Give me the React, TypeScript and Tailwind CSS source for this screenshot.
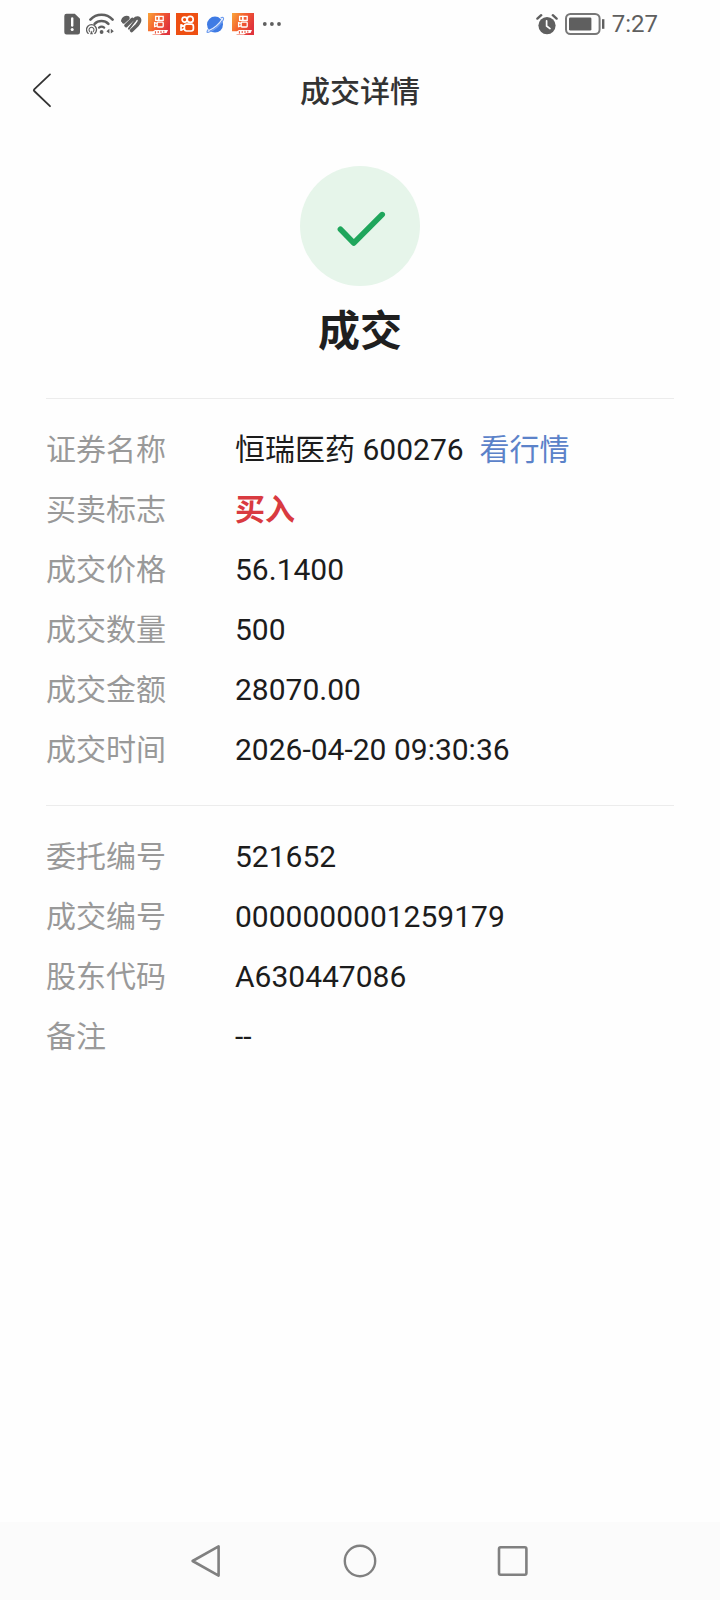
import React from 'react'

// Type definition for one label / value line
interface DetailItem {
  label: string
  value: string
  highlight?: boolean
  link?: { text: string; href: string }
}

// Trade details
const tradeItems: DetailItem[] = [
  { label: '证券名称', value: '恒瑞医药 600276', link: { text: '看行情', href: '#quote' } },
  { label: '买卖标志', value: '买入', highlight: true },
  { label: '成交价格', value: '56.1400' },
  { label: '成交数量', value: '500' },
  { label: '成交金额', value: '28070.00' },
  { label: '成交时间', value: '2026-04-20 09:30:36' }
]

// Order reference numbers
const orderItems: DetailItem[] = [
  { label: '委托编号', value: '521652' },
  { label: '成交编号', value: '0000000001259179' },
  { label: '股东代码', value: 'A630447086' },
  { label: '备注', value: '--' }
]

const SimIcon = () => (
  <svg width="16" height="22" viewBox="0 0 16 22" fill="none">
    <path d="M2.5 0.7H10.8L16 5.8V19.2A2.2 2.2 0 0 1 13.8 21.4H2.5A2.2 2.2 0 0 1 0.3 19.2V2.9A2.2 2.2 0 0 1 2.5 0.7Z" fill="#5f5f5f" />
    <path d="M8.2 5.5V12.5" stroke="#fff" strokeWidth="2.4" strokeLinecap="round" />
    <circle cx="8.2" cy="16.6" r="1.5" fill="#fff" />
  </svg>
)

const WifiIcon = () => (
  <svg width="28" height="22" viewBox="0 0 28 22" fill="none" stroke="#5f5f5f" strokeLinecap="round">
    <path d="M4.4 6.6C10.4 0.2 20.6 0.2 26.6 6.6" strokeWidth="2.6" />
    <path d="M8.6 10.8C12.2 7 18.8 7 22.4 10.8" strokeWidth="2.6" />
    <path d="M13 14.6C14.6 13.4 16.6 13.4 18.2 14.6" strokeWidth="2.2" />
    <circle cx="15.6" cy="19" r="1.9" fill="#5f5f5f" stroke="none" />
    <path d="M2.2 20.4A5 5 0 1 1 8.8 20.4" strokeWidth="1.3" />
    <path d="M3.8 18.6A2.5 2.5 0 1 1 7.2 18.6" strokeWidth="1.1" />
    <path d="M5.5 17.4L7 21.2H4Z" fill="#5f5f5f" stroke="none" />
    <path d="M23.4 15.8V20.6L20.4 18.2ZM24.8 15.8V20.6L27.8 18.2Z" fill="#5f5f5f" stroke="none" />
  </svg>
)

const HealthIcon = () => (
  <svg width="22" height="22" viewBox="0 0 22 22" fill="none" stroke="#5f5f5f" strokeWidth="3.6" strokeLinecap="round" strokeLinejoin="round">
    <path d="M2.8 7.6C3.4 5.2 5.6 4.2 7.8 4.8" />
    <path d="M3.6 8.8L7.6 5.4" />
    <path d="M6 12.6L12.4 6.4" />
    <path d="M9 15.6L15.2 7.4" strokeWidth="2" />
    <path d="M14.6 6.6C16.2 4.4 19.2 4.4 19.6 7C19.8 9 18.4 10.6 17 12.2L11.6 17.6" />
  </svg>
)

// Video camera shape of the app logo
const CameraGlyph = () => (
  <g fill="none" stroke="#fff" strokeWidth="1.7">
    <circle cx="8.6" cy="6.6" r="2.5" />
    <circle cx="14.2" cy="6.4" r="3" />
    <rect x="8.4" y="11.2" width="9" height="6.8" rx="2.2" />
    <path d="M8.2 13.2L5 11.8V17.2L8.2 15.8" strokeLinejoin="round" />
  </g>
)

const VideoAppIcon = () => (
  <svg width="22" height="22" viewBox="0 0 22 22">
    <rect width="22" height="22" fill="#ee4f12" />
    <CameraGlyph />
  </svg>
)

const VideoLiteIcon = ({ id }: { id: string }) => (
  <svg width="22" height="22" viewBox="0 0 22 22">
    <defs>
      <linearGradient id={id} x1="0" y1="0" x2="1" y2="0.5">
        <stop offset="0" stopColor="#f9a53a" />
        <stop offset="0.5" stopColor="#f4602f" />
        <stop offset="1" stopColor="#e0343c" />
      </linearGradient>
    </defs>
    <rect width="22" height="22" fill={`url(#${id})`} />
    <g fill="none" stroke="#fff" strokeWidth="1.3">
      <rect x="7.6" y="3.4" width="3.2" height="4" />
      <rect x="10.8" y="3.4" width="4.4" height="4" />
      <rect x="9.2" y="9.2" width="6" height="4.8" rx="0.8" />
      <path d="M9 10.4L6.6 9.6V13.6L9 12.8" />
    </g>
    <path d="M0 18.2H5L7 17H20L18.6 20L14 20.2L12 21.4H5L4 22H0Z" fill="#fff" />
    <path d="M7.4 18.2V20.6M10.2 18V20M13 17.8V20M15.8 17.8V19.6" stroke="#e8482f" strokeWidth="1" />
  </svg>
)

const PlanetIcon = () => (
  <svg width="22" height="22" viewBox="0 0 22 22" fill="none">
    <circle cx="11" cy="11.6" r="8" fill="#3f7be4" />
    <path d="M4.6 17.6C9.6 15.8 15.6 10.8 18 6.4" stroke="#dbe7fc" strokeWidth="1.2" />
    <path d="M4.2 16.4C2.6 18.6 2.6 19.8 4.6 19.2C10 17.6 17.6 11.2 19.4 6.6C20 4.4 18.8 3.8 16.6 5" stroke="#6f9df0" strokeWidth="1.2" />
  </svg>
)

const AlarmIcon = () => (
  <svg width="22" height="22" viewBox="0 0 22 22" fill="none" strokeLinecap="round">
    <circle cx="11" cy="12.6" r="8.6" fill="#5f5f5f" />
    <path d="M1.4 5.6L5.2 2.2M20.6 5.6L16.8 2.2" stroke="#5f5f5f" strokeWidth="2.4" />
    <path d="M10.6 7.8V13L14 15.6" stroke="#fff" strokeWidth="1.7" />
  </svg>
)

const BatteryIcon = () => (
  <svg width="40" height="22" viewBox="0 0 40 22" fill="none">
    <rect x="1" y="1" width="33.6" height="20" rx="4.5" stroke="#777" strokeWidth="2" />
    <rect x="4" y="4.4" width="22.4" height="13.2" rx="1.4" fill="#5f5f5f" />
    <path d="M38.2 6.2V15.8" stroke="#5f5f5f" strokeWidth="2.4" />
  </svg>
)

const StatusBar = () => (
  <div className="flex h-12 items-center justify-between pr-[62px] pl-16">
    <div className="flex items-center gap-[6px]">
      <SimIcon />
      <WifiIcon />
      <HealthIcon />
      <VideoLiteIcon id="lite-a" />
      <VideoAppIcon />
      <PlanetIcon />
      <VideoLiteIcon id="lite-b" />
      <svg width="24" height="22" viewBox="0 0 24 22" fill="#5f5f5f">
        <circle cx="4.8" cy="11" r="1.9" />
        <circle cx="11.9" cy="11" r="1.9" />
        <circle cx="19" cy="11" r="1.9" />
      </svg>
    </div>
    <div className="flex items-center gap-[7px]">
      <AlarmIcon />
      <BatteryIcon />
      <span className="text-2xl text-[#5f5f5f]">7:27</span>
    </div>
  </div>
)

const Header = () => (
  <header className="grid h-[86px] grid-cols-[1fr_auto_1fr] items-center px-6">
    <button type="button" aria-label="返回" className="flex h-12 w-9 items-center justify-center">
      <svg width="20" height="36" viewBox="0 0 20 36" fill="none">
        <path d="M18 1.4L2.2 16.4Q1.4 17.2 2.2 18L18 33.2" stroke="#333" strokeWidth="1.8" strokeLinecap="round" />
      </svg>
    </button>
    <h1 className="text-[30px] font-medium text-[#333333]">成交详情</h1>
  </header>
)

const DetailList = ({ items }: { items: DetailItem[] }) => (
  <dl className="border-t border-[#ececec] pt-[21px] pb-[25px]">
    {items.map((item) => (
      <div key={item.label} className="flex h-[60px] items-center">
        <dt className="w-[189px] shrink-0 text-[#999999]">{item.label}</dt>
        <dd className={item.highlight ? 'font-bold text-[#d93a40]' : 'text-[#1c1c1c]'}>
          {item.value}
          {item.link && (
            <a href={item.link.href} className="ml-4 text-[#5b82c9]">
              {item.link.text}
            </a>
          )}
        </dd>
      </div>
    ))}
  </dl>
)

const SystemNav = () => (
  <nav className="grid h-[78px] grid-cols-3 items-center justify-items-center bg-[#fbfbfb] px-[18%]">
    <button type="button" aria-label="后退">
      <svg width="34" height="34" viewBox="0 0 34 34" fill="none" stroke="#808080" strokeWidth="2.6" strokeLinejoin="round">
        <path d="M29.6 2.4V31.6L3.6 17Z" />
      </svg>
    </button>
    <button type="button" aria-label="主页">
      <svg width="34" height="34" viewBox="0 0 34 34" fill="none" stroke="#808080" strokeWidth="2.4">
        <circle cx="17" cy="17" r="15.2" />
      </svg>
    </button>
    <button type="button" aria-label="最近任务">
      <svg width="34" height="34" viewBox="0 0 34 34" fill="none" stroke="#808080" strokeWidth="2.6">
        <rect x="2" y="3.3" width="27.4" height="27.4" rx="1.6" />
      </svg>
    </button>
  </nav>
)

const App = () => {
  return (
    <div className="flex min-h-screen flex-col bg-[#fefefe] font-[Roboto,'Noto_Sans_CJK_SC',sans-serif]">
      <StatusBar />
      <Header />

      <main className="flex-1 px-[46px] pt-8 text-[30px] leading-10">
        {/* Result badge */}
        <section className="flex flex-col items-center pb-[36px]">
          <div className="flex size-[120px] items-center justify-center rounded-full bg-[#e6f5ea]">
            <svg width="52" height="48" viewBox="0 0 52 48" fill="none">
              <path d="M6.4 27.2L19.8 41L48.2 12.6" stroke="#1fa65c" strokeWidth="5.6" strokeLinecap="round" strokeLinejoin="round" />
            </svg>
          </div>
          <h2 className="mt-4 text-[42px] leading-[60px] font-bold text-[#1f1f1f]">成交</h2>
        </section>

        {/* Trade information */}
        <DetailList items={tradeItems} />
        <DetailList items={orderItems} />
      </main>

      <SystemNav />
    </div>
  )
}

export default App
